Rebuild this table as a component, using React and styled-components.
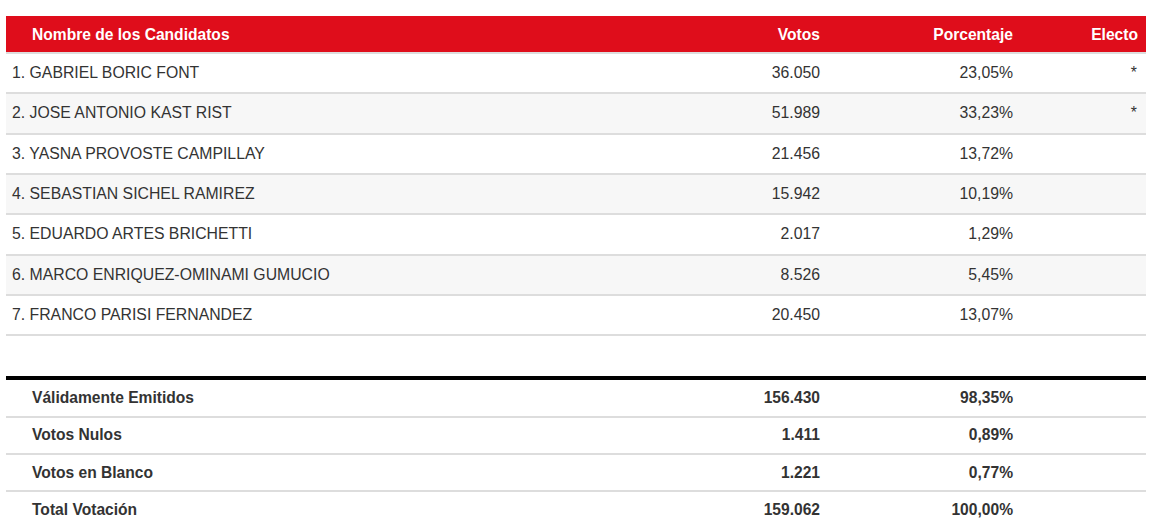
import React from 'react';
import styled, { createGlobalStyle } from 'styled-components';

const GlobalStyle = createGlobalStyle`
  body {
    margin: 0;
    background: #ffffff;
    font-family: "Liberation Sans", Arial, Helvetica, sans-serif;
  }
`;

const candidates = [
  { name: '1. GABRIEL BORIC FONT', votes: '36.050', pct: '23,05%', elected: true },
  { name: '2. JOSE ANTONIO KAST RIST', votes: '51.989', pct: '33,23%', elected: true },
  { name: '3. YASNA PROVOSTE CAMPILLAY', votes: '21.456', pct: '13,72%' },
  { name: '4. SEBASTIAN SICHEL RAMIREZ', votes: '15.942', pct: '10,19%' },
  { name: '5. EDUARDO ARTES BRICHETTI', votes: '2.017', pct: '1,29%' },
  { name: '6. MARCO ENRIQUEZ-OMINAMI GUMUCIO', votes: '8.526', pct: '5,45%' },
  { name: '7. FRANCO PARISI FERNANDEZ', votes: '20.450', pct: '13,07%' },
];

const totals = [
  { label: 'Válidamente Emitidos', votes: '156.430', pct: '98,35%' },
  { label: 'Votos Nulos', votes: '1.411', pct: '0,89%' },
  { label: 'Votos en Blanco', votes: '1.221', pct: '0,77%' },
  { label: 'Total Votación', votes: '159.062', pct: '100,00%', last: true },
];

function App() {
  return (
    <>
      <GlobalStyle />
      <Page>
        <Table>
          <HeaderRow>
            <HeadCell $pad>Nombre de los Candidatos</HeadCell>
            <HeadCell $right>Votos</HeadCell>
            <HeadCell $right>Porcentaje</HeadCell>
            <HeadCell $right>Electo</HeadCell>
          </HeaderRow>
          {candidates.map((c, i) => (
            <Row key={c.name} $alt={i % 2 === 1}>
              <Cell>{c.name}</Cell>
              <Cell $right>{c.votes}</Cell>
              <Cell $right>{c.pct}</Cell>
              <Cell $right $star>{c.elected ? '*' : ''}</Cell>
            </Row>
          ))}
          <Spacer />
          <TotalsBlock>
            {totals.map((t) => (
              <TotalRow key={t.label} $last={t.last}>
                <TotalCell $pad>{t.label}</TotalCell>
                <TotalCell $right>{t.votes}</TotalCell>
                <TotalCell $right>{t.pct}</TotalCell>
                <TotalCell />
              </TotalRow>
            ))}
          </TotalsBlock>
        </Table>
      </Page>
    </>
  );
}

const Page = styled.div`
  padding: 16px 14px 0 6px;
  width: 1140px;
`;

const Table = styled.div`
  display: flex;
  flex-direction: column;
  width: 1140px;
`;

const columns = `622px 200px 193px 125px`;

const HeaderRow = styled.div`
  display: grid;
  grid-template-columns: ${columns};
  align-items: center;
  height: 36px;
  padding-top: 1px;
  box-sizing: border-box;
  background-color: #df0d1b;
  border-bottom: 2px solid #dddddd;
  height: 38px;
`;

const HeadCell = styled.div`
  color: #ffffff;
  font-size: 15.6px;
  font-weight: 700;
  text-align: ${({ $right }) => ($right ? 'right' : 'left')};
  padding: ${({ $pad }) => ($pad ? '0 8px 0 26px' : '0 8px 0 0')};
`;

const Row = styled.div`
  display: grid;
  grid-template-columns: ${columns};
  align-items: center;
  height: 38.33px;
  background-color: ${({ $alt }) => ($alt ? '#f7f7f7' : '#ffffff')};
  border-bottom: 2px solid #dddddd;
`;

const Cell = styled.div`
  color: #333333;
  font-size: 15.8px;
  text-align: ${({ $right }) => ($right ? 'right' : 'left')};
  padding: ${({ $right, $star }) =>
    $star ? '0 9px 0 0' : $right ? '0 8px 0 0' : '0 0 0 6px'};
`;

const Spacer = styled.div`
  height: 40px;
`;

const TotalsBlock = styled.div`
  border-top: 4px solid #000000;
  display: flex;
  flex-direction: column;
`;

const TotalRow = styled.div`
  display: grid;
  grid-template-columns: ${columns};
  align-items: center;
  height: 35.3px;
  border-bottom: ${({ $last }) => ($last ? 'none' : '2px solid #dddddd')};
`;

const TotalCell = styled.div`
  color: #333333;
  font-size: 15.6px;
  font-weight: 700;
  text-align: ${({ $right }) => ($right ? 'right' : 'left')};
  padding: ${({ $pad }) => ($pad ? '0 8px 0 26px' : '0 8px 0 0')};
`;

export default App;
